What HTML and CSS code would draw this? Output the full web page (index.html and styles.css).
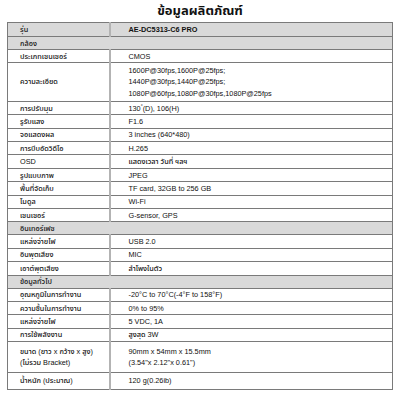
FILE: index.html
```html
<!DOCTYPE html>
<html lang="th">
<head>
<meta charset="utf-8">
<title>ข้อมูลผลิตภัณฑ์</title>
<link rel="stylesheet" href="styles.css">
</head>
<body>
<div class="page">
  <h1 class="title">ข้อมูลผลิตภัณฑ์</h1>
  <table class="spec">
    <colgroup><col class="c-label"><col class="c-value"></colgroup>
    <tbody>
      <tr class="head"><td class="lbl">รุ่น</td><td class="val model">AE-DC5313-C6 PRO</td></tr>
      <tr class="group"><td colspan="2">กล้อง</td></tr>
      <tr><td class="lbl">ประเภทเซนเซอร์</td><td class="val">CMOS</td></tr>
      <tr class="three"><td class="lbl">ความละเอียด</td><td class="val">1600P@30fps,1600P@25fps;<br>1440P@30fps,1440P@25fps;<br>1080P@60fps,1080P@30fps,1080P@25fps</td></tr>
      <tr><td class="lbl">การปรับมุม</td><td class="val">130<sup>°</sup>(D), 106(H)</td></tr>
      <tr><td class="lbl">รูรับแสง</td><td class="val">F1.6</td></tr>
      <tr><td class="lbl">จอแสดงผล</td><td class="val">3 inches (640*480)</td></tr>
      <tr><td class="lbl">การบีบอัดวิดีโอ</td><td class="val">H.265</td></tr>
      <tr><td class="lbl">OSD</td><td class="val">แสดงเวลา วันที่ ฯลฯ</td></tr>
      <tr><td class="lbl">รูปแบบภาพ</td><td class="val">JPEG</td></tr>
      <tr><td class="lbl">พื้นที่จัดเก็บ</td><td class="val">TF card, 32GB to 256 GB</td></tr>
      <tr><td class="lbl">โมดูล</td><td class="val">Wi-Fi</td></tr>
      <tr><td class="lbl">เซนเซอร์</td><td class="val">G-sensor, GPS</td></tr>
      <tr class="group"><td colspan="2">อินเทอร์เฟซ</td></tr>
      <tr><td class="lbl">แหล่งจ่ายไฟ</td><td class="val">USB 2.0</td></tr>
      <tr><td class="lbl">อินพุตเสียง</td><td class="val">MIC</td></tr>
      <tr><td class="lbl">เอาต์พุตเสียง</td><td class="val">ลำโพงในตัว</td></tr>
      <tr class="group"><td colspan="2">ข้อมูลทั่วไป</td></tr>
      <tr><td class="lbl">อุณหภูมิในการทำงาน</td><td class="val">-20°C to 70°C(-4°F to 158°F)</td></tr>
      <tr><td class="lbl">ความชื้นในการทำงาน</td><td class="val">0% to 95%</td></tr>
      <tr><td class="lbl">แหล่งจ่ายไฟ</td><td class="val">5 VDC, 1A</td></tr>
      <tr><td class="lbl">การใช้พลังงาน</td><td class="val">สูงสุด 3W</td></tr>
      <tr class="two"><td class="lbl">ขนาด (ยาว x กว้าง x สูง)<br>(ไม่รวม Bracket)</td><td class="val">90mm x 54mm x 15.5mm<br>(3.54"x 2.12"x 0.61")</td></tr>
      <tr class="last"><td class="lbl">น้ำหนัก (ประมาณ)</td><td class="val">120 g(0.26ib)</td></tr>
    </tbody>
  </table>
</div>
</body>
</html>
```

FILE: styles.css
```css
html, body {
  margin: 0;
  padding: 0;
  background: #ffffff;
}

body {
  font-family: "Liberation Sans", "Noto Sans Thai", "Noto Sans", "DejaVu Sans", sans-serif;
  color: #111111;
}

.page {
  width: 386px;
  padding-left: 7px;
}

.title {
  margin: 0;
  height: 22px;
  line-height: 21px;
  font-size: 13px;
  font-weight: bold;
  text-align: center;
}

.spec {
  width: 386px;
  border-collapse: collapse;
  table-layout: fixed;
  border: 1px solid #7a7a7a;
  font-size: 7.3px;
  font-weight: 500;
}

.c-label { width: 102px; }

.spec td {
  height: 12.4px;
  padding: 0;
  line-height: 9px;
  vertical-align: middle;
  border-top: 1px solid #7a7a7a;
  border-bottom: 1px solid #7a7a7a;
  white-space: nowrap;
}

.spec td.lbl {
  padding-left: 12px;
  border-right: 2px solid #b3b3b3;
}

.spec td.val {
  padding-left: 18px;
}

.spec .head td {
  height: 13px;
  background: #d9d9d9;
}

.spec .model {
  font-weight: bold;
}

.spec .group td {
  height: 12px;
  padding-left: 12px;
  background: #d9d9d9;
}

.spec .three td {
  height: 37.5px;
  line-height: 11.3px;
}

.spec .two td {
  height: 30px;
  line-height: 11px;
}

.spec .last td {
  height: 15.5px;
}

sup {
  font-size: 5px;
  line-height: 0;
  vertical-align: 3px;
}
```
